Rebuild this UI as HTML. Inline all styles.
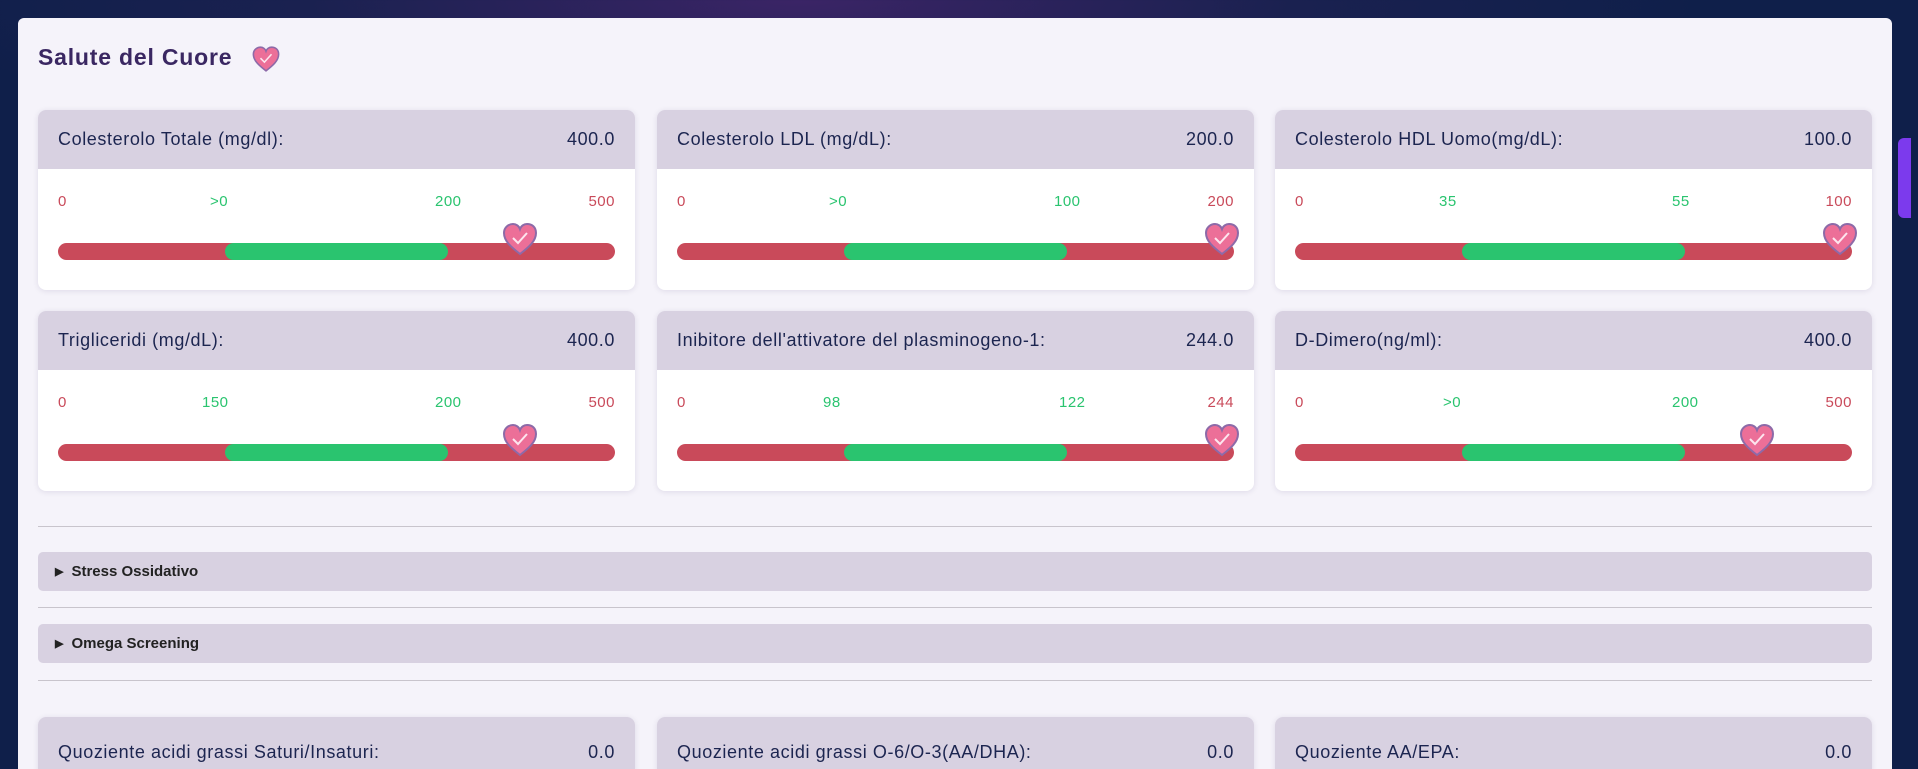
<!DOCTYPE html>
<html><head><meta charset="utf-8"><style>
*{box-sizing:border-box;margin:0;padding:0}
html,body{width:1918px;height:769px;overflow:hidden}
body{background:radial-gradient(ellipse 900px 160px at 800px 0,#3b2466 0%,#1a2150 55%,#0f1f4a 100%);font-family:"Liberation Sans",sans-serif;position:relative}
.panel{position:absolute;left:18px;top:18px;width:1874px;height:751px;background:#f5f3fa;border-radius:6px 6px 0 0;overflow:hidden}
.title{position:absolute;left:38px;top:44px;font-size:23px;font-weight:bold;color:#3a2762;letter-spacing:0.8px}
.card{position:absolute;width:597px;height:180px;background:#fff;border-radius:8px;box-shadow:0 1px 6px rgba(60,40,100,.12);overflow:hidden}
.hd{height:59px;background:#d8d1e1;display:flex;justify-content:space-between;align-items:center;padding:0 20px;font-size:18px;color:#1c2550;letter-spacing:0.6px}
.lbl{position:absolute;top:83px;font-size:15px;letter-spacing:0.5px}
.r{color:#c94a5a}.g{color:#2ac46f}
.bar{position:absolute;left:20px;right:20px;top:133px;height:17px;border-radius:9px;background:#c94a5a}
.bar i{position:absolute;left:30%;width:40%;top:0;bottom:0;border-radius:9px;background:#2ac46f}
.ht{position:absolute;top:112px;width:38px;height:34px;margin-left:-19px}
.sep{position:absolute;left:38px;width:1834px;height:1px;background:#c8c4cc}
.acc{position:absolute;left:38px;width:1834px;height:39px;background:#d8d1e1;border-radius:5px;font-size:15px;font-weight:bold;color:#222;padding-left:17px;line-height:39px}
.acc b{font-size:11px;margin-right:8px;vertical-align:1px}
.sb{position:absolute;left:1898px;top:138px;width:13px;height:80px;background:#7c3aed;border-radius:6px 0 0 6px}
</style></head><body>
<svg width="0" height="0" style="position:absolute"><defs><g id="h"><path d="M19 32 C10 25 3 19 3 11 C3 5 8 2 12 2 C15 2 18 4 19 7 C20 4 23 2 26 2 C31 2 35 5 35 11 C35 19 28 25 19 32Z" fill="#ec6f98" stroke="#8d6aa8" stroke-width="2"/><path d="M12 16 L17 21 L26 11" fill="none" stroke="#fde6ef" stroke-width="2"/></g></defs></svg>
<div class="panel"></div>
<div class="sb"></div>
<div class="title">Salute del Cuore</div>
<svg style="position:absolute;left:251px;top:45px" width="30" height="28" viewBox="0 0 38 34"><use href="#h"/></svg>

<div class="card" style="left:38px;top:110px"><div class="hd"><span>Colesterolo Totale (mg/dl):</span><span>400.0</span></div>
<span class="lbl r" style="left:20px">0</span><span class="lbl g" style="left:172px">&gt;0</span><span class="lbl g" style="left:397px">200</span><span class="lbl r" style="right:20px">500</span>
<div class="bar"><i></i></div><svg class="ht" style="left:482px" viewBox="0 0 38 34"><use href="#h"/></svg></div>

<div class="card" style="left:657px;top:110px"><div class="hd"><span>Colesterolo LDL (mg/dL):</span><span>200.0</span></div>
<span class="lbl r" style="left:20px">0</span><span class="lbl g" style="left:172px">&gt;0</span><span class="lbl g" style="left:397px">100</span><span class="lbl r" style="right:20px">200</span>
<div class="bar"><i></i></div><svg class="ht" style="left:565px" viewBox="0 0 38 34"><use href="#h"/></svg></div>

<div class="card" style="left:1275px;top:110px"><div class="hd"><span>Colesterolo HDL Uomo(mg/dL):</span><span>100.0</span></div>
<span class="lbl r" style="left:20px">0</span><span class="lbl g" style="left:164px">35</span><span class="lbl g" style="left:397px">55</span><span class="lbl r" style="right:20px">100</span>
<div class="bar"><i></i></div><svg class="ht" style="left:565px" viewBox="0 0 38 34"><use href="#h"/></svg></div>

<div class="card" style="left:38px;top:311px"><div class="hd"><span>Trigliceridi (mg/dL):</span><span>400.0</span></div>
<span class="lbl r" style="left:20px">0</span><span class="lbl g" style="left:164px">150</span><span class="lbl g" style="left:397px">200</span><span class="lbl r" style="right:20px">500</span>
<div class="bar"><i></i></div><svg class="ht" style="left:482px" viewBox="0 0 38 34"><use href="#h"/></svg></div>

<div class="card" style="left:657px;top:311px"><div class="hd"><span>Inibitore dell'attivatore del plasminogeno-1:</span><span>244.0</span></div>
<span class="lbl r" style="left:20px">0</span><span class="lbl g" style="left:166px">98</span><span class="lbl g" style="left:402px">122</span><span class="lbl r" style="right:20px">244</span>
<div class="bar"><i></i></div><svg class="ht" style="left:565px" viewBox="0 0 38 34"><use href="#h"/></svg></div>

<div class="card" style="left:1275px;top:311px"><div class="hd"><span>D-Dimero(ng/ml):</span><span>400.0</span></div>
<span class="lbl r" style="left:20px">0</span><span class="lbl g" style="left:168px">&gt;0</span><span class="lbl g" style="left:397px">200</span><span class="lbl r" style="right:20px">500</span>
<div class="bar"><i></i></div><svg class="ht" style="left:482px" viewBox="0 0 38 34"><use href="#h"/></svg></div>

<div class="sep" style="top:526px"></div>
<div class="acc" style="top:552px"><b>▶</b>Stress Ossidativo</div>
<div class="sep" style="top:607px"></div>
<div class="acc" style="top:624px"><b>▶</b>Omega Screening</div>
<div class="sep" style="top:680px"></div>

<div class="card" style="left:38px;top:717px;height:60px"><div class="hd" style="height:70px"><span>Quoziente acidi grassi Saturi/Insaturi:</span><span>0.0</span></div></div>
<div class="card" style="left:657px;top:717px;height:60px"><div class="hd" style="height:70px"><span>Quoziente acidi grassi O-6/O-3(AA/DHA):</span><span>0.0</span></div></div>
<div class="card" style="left:1275px;top:717px;height:60px"><div class="hd" style="height:70px"><span>Quoziente AA/EPA:</span><span>0.0</span></div></div>
</body></html>
